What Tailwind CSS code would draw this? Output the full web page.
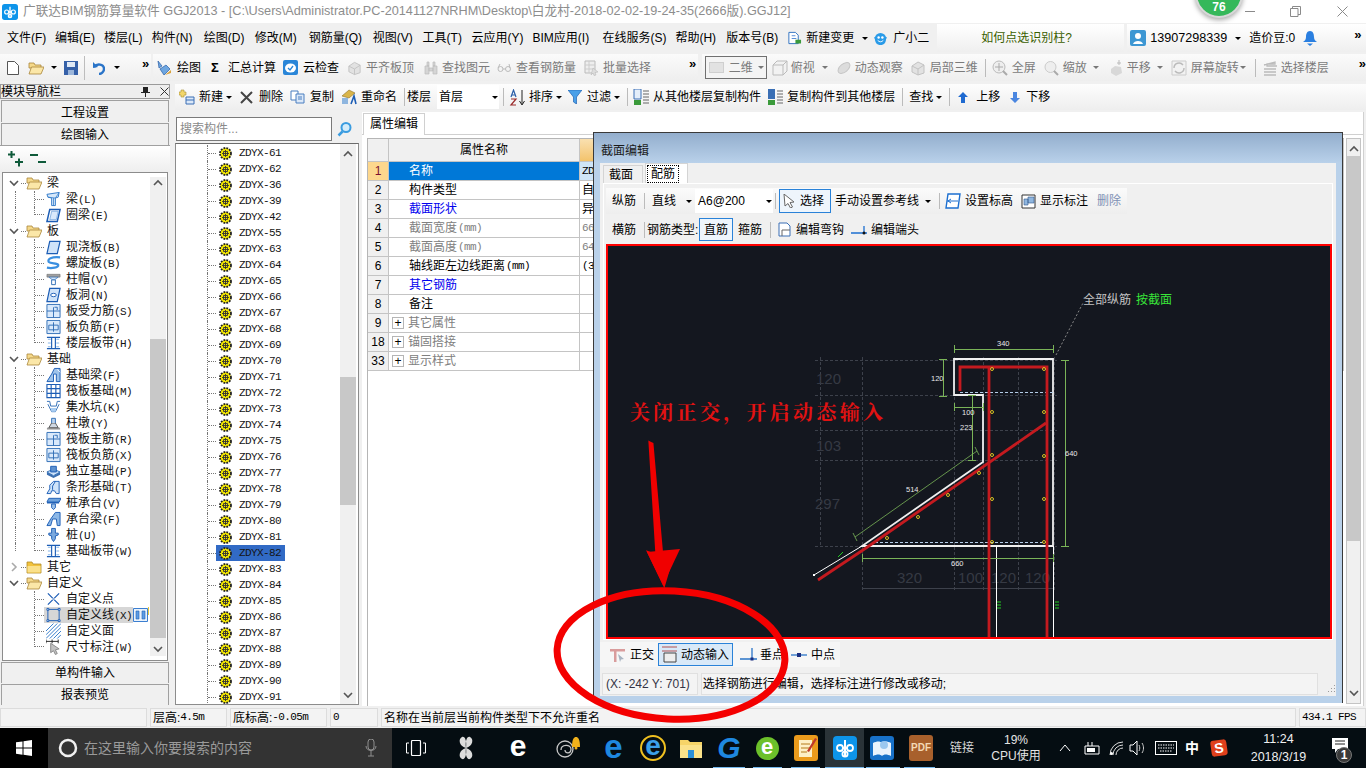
<!DOCTYPE html>
<html lang="zh-CN">
<head>
<meta charset="utf-8">
<title>GGJ2013</title>
<script src="https://cdn.jsdelivr.net/npm/@tailwindcss/browser@4"></script>
</head>
<body>
<svg class="hidden" width="0" height="0">
  <symbol id="gear" viewBox="0 0 13 13"><circle cx="6.500" cy="6.500" r="5.500" fill="#f4e800" stroke="#222" stroke-width="1.800" stroke-dasharray="1.800 1.100"/><circle cx="6.500" cy="6.500" r="4" fill="#f4e800"/><path d="M4.500 4.500h4v4h-4zM6.500 3v7M3 6.500h7" fill="none" stroke="#333" stroke-width=".9"/></symbol>
  <symbol id="fo" viewBox="0 0 16 14"><path d="M1 2h5l1 2h6v3H1z" fill="#f5d98a" stroke="#a9863a" stroke-width=".8"/><path d="M1 13l2.500-7H16l-3 7z" fill="#fbe7a8" stroke="#a9863a" stroke-width=".8"/></symbol>
  <symbol id="fc" viewBox="0 0 16 14"><path d="M1 2h5l1 2h8v9H1z" fill="#f2c23c" stroke="#b08a2a" stroke-width=".8"/><path d="M1.500 6h13v6.500h-13z" fill="#fae08a"/></symbol>
  <symbol id="down" viewBox="0 0 10 7"><path d="M1 1l4 4 4-4" fill="none" stroke="#555" stroke-width="1.600"/></symbol>
  <symbol id="up" viewBox="0 0 10 7"><path d="M1 6l4-4 4 4" fill="none" stroke="#555" stroke-width="1.600"/></symbol>
  <symbol id="beam" viewBox="0 0 16 16"><path d="M1 3l13-2-1 5-3 1v8H6V7L2 6z" fill="#d6e8fa" stroke="#2f79c9"/><path d="M8 7v8M2 6l8 1 4-6" fill="none" stroke="#2f79c9" stroke-width=".8"/></symbol>
  <symbol id="ring" viewBox="0 0 16 16"><path d="M4 2h11l-3 13H1z" fill="#fff" stroke="#1c5db5" stroke-width="1.600"/><path d="M6 4h7l-2 9H4z" fill="#d9e9fb" stroke="#5f97d8" stroke-width=".7"/></symbol>
  <symbol id="slab" viewBox="0 0 16 16"><path d="M4 2h11l-3 13H1z" fill="#cfe3f9" stroke="#1c5db5" stroke-width="1.300"/></symbol>
  <symbol id="spiral" viewBox="0 0 16 16"><path d="M15 2C6 1 1 4 3 7c2 2 9 1 10 3 1 3-7 4-12 3" fill="none" stroke="#3a8fe0" stroke-width="2.400"/></symbol>
  <symbol id="cap" viewBox="0 0 16 16"><path d="M1 3h14v3H1z" fill="#a0a0a0" stroke="#666" stroke-width=".6"/><path d="M3 6h10L9 9H7z" fill="#cfe3f9" stroke="#2f6db5" stroke-width=".7"/><path d="M6 9h4v5H6z" fill="#fff" stroke="#2f6db5"/></symbol>
  <symbol id="hole" viewBox="0 0 16 16"><path d="M4 1h11l-3 14H1z" fill="#cfe3f9" stroke="#1c5db5" stroke-width="1.300"/><ellipse cx="8" cy="8" rx="3" ry="1.800" fill="#fff" stroke="#1c5db5"/></symbol>
  <symbol id="rb1" viewBox="0 0 16 16"><path d="M1 1h14v14H1z" fill="#d9e9fb" stroke="#2f6db5"/><path d="M1 8h14M8 4v11" stroke="#2f6db5" fill="none"/><path d="M9 4h3v3" stroke="#2f6db5" fill="none"/></symbol>
  <symbol id="rb2" viewBox="0 0 16 16"><path d="M1 1h14v14H1z" fill="#d9e9fb" stroke="#2f6db5"/><path d="M3 6h10v5H3zM8 3v10" stroke="#2f6db5" fill="none"/></symbol>
  <symbol id="band" viewBox="0 0 16 16"><path d="M1 2h14M1 14h14M6 2v12M10 2v12" stroke="#1c5db5" fill="none" stroke-width="1.200"/><path d="M2 4h3M2 8h3M2 12h3M11 4h3M11 8h3M11 12h3" stroke="#7fb0e6"/></symbol>
  <symbol id="fb" viewBox="0 0 16 16"><path d="M1 15l5-8 3-6h6v14h-4V7H8v8z" fill="#9ec3ea" stroke="#1c5db5"/><path d="M12 2l3 3" stroke="#fff"/></symbol>
  <symbol id="raft" viewBox="0 0 16 16"><path d="M1 1h14v14H1zM1 5.500h14M1 10.500h14M5.500 1v14M10.500 1v14" fill="none" stroke="#1c5db5" stroke-width="1.200"/></symbol>
  <symbol id="pit" viewBox="0 0 16 16"><path d="M1 2h3l1 5h6l1-5h3M2 5l4 8h4l4-8" fill="none" stroke="#2f6db5"/><path d="M5 9h6l-1 4H6z" fill="#a8cdf2"/></symbol>
  <symbol id="pier" viewBox="0 0 16 16"><path d="M1 13h14v2H1z" fill="#999"/><path d="M3 13l3-5h4l3 5z" fill="#cfd8e3" stroke="#555"/><path d="M6 8V3h4v5" fill="#bcd4ee" stroke="#2f6db5"/></symbol>
  <symbol id="ftg" viewBox="0 0 16 16"><path d="M1 9l7 4 7-4v3l-7 3.500L1 12z" fill="#3c6fb0"/><path d="M1 9l7-3 7 3-7 4z" fill="#cfe3f9" stroke="#2f6db5"/><path d="M5 3h6v6H5z" fill="#5e92d0" stroke="#1c5db5"/></symbol>
  <symbol id="strip" viewBox="0 0 16 16"><path d="M1 15l3-5V6l4-4h6v13h-3l-2-3H6l-1 3z" fill="#cfe3f9" stroke="#1c5db5"/><path d="M10 2l-3 5v4" stroke="#1c5db5" fill="none"/></symbol>
  <symbol id="pcap" viewBox="0 0 16 16"><path d="M3 3h13l-2 4H1z" fill="#6fa3dc" stroke="#1c5db5"/><path d="M1 7h13v1.500H1z" fill="#1c5db5"/><path d="M6 9h4v4l-2 2-2-2z" fill="#9ec3ea" stroke="#1c5db5"/></symbol>
  <symbol id="cb" viewBox="0 0 16 16"><path d="M1 15l4-7 5-7h5v14h-3l-1-7H7l-2 7z" fill="#8db8e6" stroke="#1c5db5"/></symbol>
  <symbol id="pile" viewBox="0 0 16 16"><path d="M6 1h4v5h3v2l-3 1v3l-2 3-2-3V9L3 8V6h3z" fill="#7ba9de" stroke="#1c5db5"/></symbol>
  <symbol id="cpt" viewBox="0 0 16 16"><path d="M2 2l12 12M14 2L2 14" stroke="#1c5db5" stroke-width="1.300"/><path d="M6.500 8h3" stroke="#fff"/></symbol>
  <symbol id="cln" viewBox="0 0 16 16"><path d="M2 2h12v12H2z" fill="none" stroke="#1c5db5"/><path d="M1 1h2v2H1zM13 1h2v2h-2zM1 13h2v2H1zM13 13h2v2h-2z" fill="#fff" stroke="#1c5db5"/></symbol>
  <symbol id="cfa" viewBox="0 0 16 16"><path d="M0 8l8-8M0 12L12 0M0 16L16 0M4 16L16 4M8 16l8-8M12 16l4-4" stroke="#2f79c9"/></symbol>
  <symbol id="dim" viewBox="0 0 16 16"><path d="M0 2h13M0 0v4M6.500 0v4M13 0v4" stroke="#222" fill="none"/><path d="M5 4l9 6-4 1 2 4-2 1-2-4-3 2z" fill="#c2c2c2" stroke="#888"/></symbol>
  <symbol id="app" viewBox="0 0 24 24"><rect width="24" height="24" rx="4" fill="#0d94ea"/><path d="M12 4v16M9 12h6" stroke="#fff" stroke-width="2"/><circle cx="7" cy="12" r="3" fill="none" stroke="#fff" stroke-width="1.800"/><circle cx="17" cy="12" r="3" fill="none" stroke="#fff" stroke-width="1.800"/><circle cx="12" cy="18" r="2.600" fill="none" stroke="#fff" stroke-width="1.800"/></symbol>
  <symbol id="grey" viewBox="0 0 16 16"><path d="M2 6l6-4 6 3v8l-6 2-6-3z" fill="#e2e2e2" stroke="#c2c2c2"/><path d="M2 6l6 3 6-4M8 9v6" stroke="#c2c2c2" fill="none"/></symbol>
  <symbol id="file" viewBox="0 0 16 16"><path d="M2 2h7l3 3v9H2z" fill="#fff" stroke="#2c6fc0"/><path d="M5 5h4v1H5zM5 8h5v1H5z" fill="#5a90d8"/><path d="M9 10h6v4H9z" fill="#3c9a3c"/></symbol>
</svg>

<div class="relative w-[1366px] h-[768px] overflow-hidden flex flex-col bg-[#f0f0f0] text-[12px] leading-none text-black font-['Liberation_Sans','Noto_Sans_CJK_SC',sans-serif] [&_b]:font-['Liberation_Mono'] [&_b]:font-normal [&_b]:text-[11px] [&_b]:tracking-[-0.6px]">

  <!-- title bar -->
  <div class="h-[23px] shrink-0 bg-white flex items-center relative">
    <svg class="w-4 h-4 ml-[2px]"><use href="#app"/></svg>
    <span class="ml-[5px] text-[#8d8d8d] text-[12.700px] whitespace-nowrap">广联达BIM钢筋算量软件 GGJ2013 - [C:\Users\Administrator.PC-20141127NRHM\Desktop\白龙村-2018-02-02-19-24-35(2666版).GGJ12]</span>
    <svg class="w-[11px] h-[11px] ml-auto" viewBox="0 0 11 11"><path d="M0 5.500h10" stroke="#8a8a8a"/></svg>
    <svg class="w-[11px] h-[11px] ml-[34px]" viewBox="0 0 11 11"><path d="M.5 2.500h7.500v8H.5zM2.500 2.500v-2h8v8h-2.500" fill="none" stroke="#8a8a8a"/></svg>
    <svg class="w-[11px] h-[11px] ml-[36px] mr-[18px]" viewBox="0 0 11 11"><path d="M.5.500l10 10M10.500.500l-10 10" stroke="#8a8a8a"/></svg>
  </div>

  <!-- menu bar -->
  <div class="h-[30px] shrink-0 flex items-center pl-[7px] whitespace-nowrap">
    <span class="w-[48px]">文件(F)</span><span class="w-[49px]">编辑(E)</span><span class="w-[48px]">楼层(L)</span><span class="w-[52px]">构件(N)</span><span class="w-[51px]">绘图(D)</span><span class="w-[54px]">修改(M)</span><span class="w-[64px]">钢筋量(Q)</span><span class="w-[50px]">视图(V)</span><span class="w-[49px]">工具(T)</span><span class="w-[61px]">云应用(Y)</span><span class="w-[70px]">BIM应用(I)</span><span class="w-[73px]">在线服务(S)</span><span class="w-[51px]">帮助(H)</span><span class="w-[61px]">版本号(B)</span>
    <svg class="w-[15px] h-4" viewBox="0 0 16 16"><use href="#file"/></svg>
    <span class="ml-[4px]">新建变更</span>
    <i class="ml-[8px] w-0 h-0 border-x-[3px] border-x-transparent border-t-[3px] border-t-black"></i>
    <svg class="ml-[5px] w-[15px] h-[15px]" viewBox="0 0 16 16"><path d="M2 8a6 6 0 1 1 12 0c0 4-2 7-6 7s-6-3-6-7z" fill="#2a9be8"/><path d="M1 7l2-1v4zM15 7l-2-1v4z" fill="#2a9be8"/><circle cx="6" cy="7" r="1.300" fill="#fff"/><circle cx="10" cy="7" r="1.300" fill="#fff"/><path d="M5 10c2 2 4 2 6 0" stroke="#fff" fill="none"/></svg>
    <span class="ml-[5px]">广小二</span>
    <div class="ml-[8px] w-[187px] h-[28px] bg-linear-to-b from-white to-[#efefef] flex items-center pl-[44px] text-[#3b5f00]">如何点选识别柱?</div>
    <div class="ml-[3px] w-[239px] h-[28px] bg-linear-to-b from-white to-[#efefef] flex items-center pl-[3px]">
      <svg class="w-4 h-4" viewBox="0 0 16 16"><rect width="16" height="16" rx="2" fill="#3d97d3"/><circle cx="8" cy="6" r="3" fill="#fff"/><path d="M3 14c1-4 9-4 10 0z" fill="#fff"/></svg>
      <span class="ml-[4px] w-[77px] text-[12.600px]">13907298339</span>
      <i class="ml-[8px] w-0 h-0 border-x-[3px] border-x-transparent border-t-[3px] border-t-black"></i>
      <span class="ml-[8px] w-[46px]">造价豆:0</span>
      <svg class="ml-[8px] w-[14px] h-4" viewBox="0 0 14 16"><path d="M7 1c3 0 4 3 4 6 0 2 1 4 3 5H0c2-1 3-3 3-5 0-3 1-6 4-6z" fill="#2a7fe0"/><path d="M4 13.500h6L7 16z" fill="#2a7fe0"/></svg>
      <span class="ml-[37px] font-bold text-[13px] -mt-[8px]">»</span>
    </div>
  </div>

  <!-- toolbar 1 -->
  <div class="h-[29px] shrink-0 flex items-center whitespace-nowrap text-[#7b7b7b]">
    <div class="w-[151px] h-[27px] bg-linear-to-b from-[#fbfbfb] to-[#eeeeee] flex items-center text-black">
      <svg class="ml-[7px] w-[12px] h-[14px]" viewBox="0 0 12 14"><path d="M.5.500h7l4 4v9H.500z" fill="#fff" stroke="#555"/></svg>
      <svg class="ml-[9px] w-4 h-[14px]"><use href="#fo"/></svg>
      <i class="ml-[7px] w-0 h-0 border-x-[3px] border-x-transparent border-t-[3px] border-t-black"></i>
      <svg class="ml-[7px] w-[14px] h-[14px]" viewBox="0 0 14 14"><path d="M0 0h14v14H0z" fill="#3560a8"/><path d="M3 1h8v5H3z" fill="#dfe9f6"/><path d="M4 9h6v5H4z" fill="#9cb6da"/></svg>
      <i class="ml-[6px] w-px h-[24px] bg-[#bdbdbd]"></i>
      <svg class="ml-[8px] w-[12px] h-[14px]" viewBox="0 0 12 14"><path d="M1 6c3-4 10-3 10 2 0 3-3 5-5 5" fill="none" stroke="#2a74c8" stroke-width="2.400"/><path d="M0 1l5 5-5 1z" fill="#2a74c8"/></svg>
      <i class="ml-[9px] w-0 h-0 border-x-[3px] border-x-transparent border-t-[3px] border-t-black"></i>
      <span class="ml-[22px] -mt-[8px] font-bold text-[13px]">»</span>
    </div>
    <div class="ml-[2px] w-[545px] h-[27px] bg-linear-to-b from-[#fbfbfb] to-[#eeeeee] flex items-center">
      <svg class="ml-[3px] w-4 h-4" viewBox="0 0 16 16"><path d="M2 1l4 5-3 2zM4 9l6-4 4 4-6 6z" fill="#6ea6e0" stroke="#2a5ea8" stroke-width=".7"/><path d="M9 15l6-5v3z" fill="#d9a23c"/></svg>
      <span class="ml-[5px] text-black">绘图</span>
      <span class="ml-[10px] w-[9px] text-black font-bold text-[13px]">Σ</span>
      <span class="ml-[8px] text-black">汇总计算</span>
      <svg class="ml-[7px] w-[15px] h-[15px]" viewBox="0 0 15 15"><rect width="15" height="15" rx="2" fill="#2a86d8"/><ellipse cx="7.500" cy="8" rx="5.500" ry="4.500" fill="#fff"/><path d="M5 8l2 2 3-4" stroke="#2a86d8" fill="none" stroke-width="1.300"/></svg>
      <span class="ml-[5px] text-black">云检查</span>
      <svg class="ml-[8px] w-[15px] h-4"><use href="#grey"/></svg><span class="ml-[4px]">平齐板顶</span>
      <svg class="ml-[10px] w-[14px] h-[14px]" viewBox="0 0 14 14"><path d="M1 5h4v8H1zM9 5h4v8H9zM5 7h4v3H5zM3 1h2v4H3zM9 1h2v4H9z" fill="#d5d5d5" stroke="#bcbcbc" stroke-width=".7"/></svg><span class="ml-[4px]">查找图元</span>
      <svg class="ml-[7px] w-[15px] h-[14px]" viewBox="0 0 15 14"><circle cx="3.500" cy="8" r="2.500" fill="none" stroke="#bbb"/><circle cx="11" cy="8" r="2.500" fill="none" stroke="#bbb"/><path d="M6 8h2.500M1 7l2-4M13 7l-1-4" stroke="#bbb"/></svg><span class="ml-[4px]">查看钢筋量</span>
      <svg class="ml-[8px] w-[15px] h-4" viewBox="0 0 15 16"><path d="M1 1h10v12H1z" fill="#eee" stroke="#bbb"/><path d="M1 5h10M1 9h10M5 1v12" stroke="#ccc"/><path d="M9 8l5 4-3 .5L12 15l-2 .5-1-2.500-2 2z" fill="#ddd" stroke="#bbb" stroke-width=".6"/></svg><span class="ml-[4px]">批量选择</span>
      <span class="ml-[38px] -mt-[8px] font-bold text-[13px] text-black">»</span>
    </div>
    <div class="ml-[4px] flex-1 h-[27px] bg-linear-to-b from-[#fbfbfb] to-[#eeeeee] flex items-center">
      <div class="ml-[3px] w-[62px] h-[23px] border border-[#707070] bg-[#f4f4f4] flex items-center pl-[3px]"><i class="w-[15px] h-[11px] bg-[#e2e2e2] border border-[#cfcfcf]"></i><span class="ml-[5px]">二维</span><i class="ml-[5px] w-0 h-0 border-x-[3px] border-x-transparent border-t-[3px] border-t-[#777]"></i></div>
      <svg class="ml-[5px] w-4 h-4" viewBox="0 0 16 16"><path d="M1 5h10v10H1zM1 5l4-4h10v10l-4 4M11 5l4-4" fill="#f2f2f2" stroke="#bbb"/></svg><span class="ml-[3px]">俯视</span><i class="ml-[7px] w-0 h-0 border-x-[3px] border-x-transparent border-t-[3px] border-t-[#777]"></i>
      <svg class="ml-[8px] w-4 h-4" viewBox="0 0 16 16"><ellipse cx="8" cy="8" rx="7" ry="4" transform="rotate(-40 8 8)" fill="#dcdcdc" stroke="#c5c5c5"/></svg><span class="ml-[3px]">动态观察</span>
      <svg class="ml-[7px] w-4 h-4"><use href="#grey"/></svg><span class="ml-[4px]">局部三维</span>
      <i class="ml-[7px] w-px h-[18px] bg-[#bbb]"></i>
      <svg class="ml-[6px] w-4 h-4" viewBox="0 0 16 16"><circle cx="7" cy="7" r="6" fill="#eee" stroke="#bbb"/><path d="M7 3v8M3 7h8" stroke="#aaa"/><path d="M11 11l4 4" stroke="#aaa" stroke-width="2"/></svg><span class="ml-[4px]">全屏</span>
      <svg class="ml-[8px] w-[15px] h-4" viewBox="0 0 15 16"><circle cx="6.500" cy="7" r="5.500" fill="#eee" stroke="#ccc"/><path d="M10 11l4 4" stroke="#aaa" stroke-width="2"/></svg><span class="ml-[4px]">缩放</span><i class="ml-[6px] w-0 h-0 border-x-[3px] border-x-transparent border-t-[3px] border-t-[#777]"></i>
      <svg class="ml-[10px] w-[14px] h-4" viewBox="0 0 14 16"><path d="M2 9l4-3 6 1 1 6-6 3-5-3z" fill="#d8d8d8"/><path d="M10 0v5M8 3h4" stroke="#bbb"/></svg><span class="ml-[4px]">平移</span><i class="ml-[6px] w-0 h-0 border-x-[3px] border-x-transparent border-t-[3px] border-t-[#777]"></i>
      <svg class="ml-[8px] w-4 h-4" viewBox="0 0 16 16"><path d="M1 1h14v14H1z" fill="#f2f2f2" stroke="#ccc"/><path d="M3 8a5 5 0 0 1 9-3M13 8a5 5 0 0 1-9 3" fill="none" stroke="#bbb" stroke-width="1.400"/></svg><span class="ml-[4px]">屏幕旋转</span><i class="ml-[1px] w-0 h-0 border-x-[3px] border-x-transparent border-t-[3px] border-t-[#777]"></i>
      <i class="ml-[9px] w-px h-[18px] bg-[#bbb]"></i>
      <svg class="ml-[7px] w-[14px] h-4" viewBox="0 0 14 16"><path d="M1 5l11-3v2H4v2h10M1 9h12M1 12h12M1 15h12" fill="none" stroke="#bbb" stroke-width="1.300"/></svg><span class="ml-[4px]">选择楼层</span>
      <span class="ml-[30px] -mt-[8px] font-bold text-[13px] text-black">»</span>
    </div>
  </div>

  <!-- work area -->
  <div class="h-[622px] shrink-0 mt-[2px] flex">

    <!-- left navigation -->
    <div class="w-[170px] shrink-0 flex flex-col">
      <div class="h-[15px] border border-[#9a9a9a] bg-[#eeeeee] flex items-center"><span>模块导航栏</span><svg class="ml-[80px] w-[9px] h-[11px]" viewBox="0 0 9 11"><path d="M2 1h5v5h2v1H5v4H4V7H0V6h2z" fill="#222"/></svg><svg class="ml-[10px] w-[9px] h-[9px]" viewBox="0 0 9 9"><path d="M.5.500l8 8M8.500.500l-8 8" stroke="#333"/></svg></div>
      <div class="mt-[1px] h-[22px] pt-[2px] border-t border-x border-[#a0a0a0] bg-[#f0f0f0] mx-px flex items-center justify-center">工程设置</div>
      <div class="h-[22px] mt-px border-t border-x border-[#a0a0a0] bg-[#f0f0f0] mx-px flex items-center justify-center">绘图输入</div>
      <div class="h-[27px] border-t border-[#a0a0a0] bg-linear-to-b from-white to-[#eeeeee] flex items-center">
        <svg class="ml-[7px] w-4 h-4" viewBox="0 0 16 16"><path d="M1 3.500h7M4.500 0v7M8 11h8M12 7.500v8" stroke="#0f5a3a" stroke-width="2"/></svg>
        <svg class="ml-[7px] w-4 h-4" viewBox="0 0 16 16"><path d="M0 4h8M8 11h8" stroke="#0f5a3a" stroke-width="2"/></svg>
      </div>
      <!-- component tree -->
      <div class="mx-[2px] h-[489px] border border-[#8c8c8c] bg-white flex">
        <div class="w-[146px] pt-[2px] whitespace-nowrap overflow-hidden text-[#111] flex flex-col">
          <div class="h-4 flex items-center"><svg class="ml-[6px] w-[10px] h-[7px]"><use href="#down"/></svg><i class="w-[5px] ml-[2px] border-t border-dotted border-[#777]"></i><svg class="w-4 h-[14px]"><use href="#fo"/></svg><span class="ml-[5px]">梁</span></div>
          <div class="h-4 flex items-center"><i class="ml-[12px] w-[19px] h-full border-l border-dotted border-[#777]"></i><i class="w-[10px] h-full border-l border-dotted border-[#777] flex items-center"><i class="w-full border-t border-dotted border-[#777]"></i></i><svg class="ml-[2px] w-[15px] h-4"><use href="#beam"/></svg><span class="ml-[5px]">梁<b>(L)</b></span></div>
          <div class="h-4 flex items-center"><i class="ml-[12px] w-[19px] h-full border-l border-dotted border-[#777]"></i><i class="w-[10px] h-1/2 self-start border-l border-b border-dotted border-[#777]"></i><svg class="ml-[2px] w-[15px] h-4"><use href="#ring"/></svg><span class="ml-[5px]">圈梁<b>(E)</b></span></div>
          <div class="h-4 flex items-center"><svg class="ml-[6px] w-[10px] h-[7px]"><use href="#down"/></svg><i class="w-[5px] ml-[2px] border-t border-dotted border-[#777]"></i><svg class="w-4 h-[14px]"><use href="#fo"/></svg><span class="ml-[5px]">板</span></div>
          <div class="h-4 flex items-center"><i class="ml-[12px] w-[19px] h-full border-l border-dotted border-[#777]"></i><i class="w-[10px] h-full border-l border-dotted border-[#777] flex items-center"><i class="w-full border-t border-dotted border-[#777]"></i></i><svg class="ml-[2px] w-[15px] h-4"><use href="#slab"/></svg><span class="ml-[5px]">现浇板<b>(B)</b></span></div>
          <div class="h-4 flex items-center"><i class="ml-[12px] w-[19px] h-full border-l border-dotted border-[#777]"></i><i class="w-[10px] h-full border-l border-dotted border-[#777] flex items-center"><i class="w-full border-t border-dotted border-[#777]"></i></i><svg class="ml-[2px] w-[15px] h-4"><use href="#spiral"/></svg><span class="ml-[5px]">螺旋板<b>(B)</b></span></div>
          <div class="h-4 flex items-center"><i class="ml-[12px] w-[19px] h-full border-l border-dotted border-[#777]"></i><i class="w-[10px] h-full border-l border-dotted border-[#777] flex items-center"><i class="w-full border-t border-dotted border-[#777]"></i></i><svg class="ml-[2px] w-[15px] h-4"><use href="#cap"/></svg><span class="ml-[5px]">柱帽<b>(V)</b></span></div>
          <div class="h-4 flex items-center"><i class="ml-[12px] w-[19px] h-full border-l border-dotted border-[#777]"></i><i class="w-[10px] h-full border-l border-dotted border-[#777] flex items-center"><i class="w-full border-t border-dotted border-[#777]"></i></i><svg class="ml-[2px] w-[15px] h-4"><use href="#hole"/></svg><span class="ml-[5px]">板洞<b>(N)</b></span></div>
          <div class="h-4 flex items-center"><i class="ml-[12px] w-[19px] h-full border-l border-dotted border-[#777]"></i><i class="w-[10px] h-full border-l border-dotted border-[#777] flex items-center"><i class="w-full border-t border-dotted border-[#777]"></i></i><svg class="ml-[2px] w-[15px] h-4"><use href="#rb1"/></svg><span class="ml-[5px]">板受力筋<b>(S)</b></span></div>
          <div class="h-4 flex items-center"><i class="ml-[12px] w-[19px] h-full border-l border-dotted border-[#777]"></i><i class="w-[10px] h-full border-l border-dotted border-[#777] flex items-center"><i class="w-full border-t border-dotted border-[#777]"></i></i><svg class="ml-[2px] w-[15px] h-4"><use href="#rb2"/></svg><span class="ml-[5px]">板负筋<b>(F)</b></span></div>
          <div class="h-4 flex items-center"><i class="ml-[12px] w-[19px] h-full border-l border-dotted border-[#777]"></i><i class="w-[10px] h-1/2 self-start border-l border-b border-dotted border-[#777]"></i><svg class="ml-[2px] w-[15px] h-4"><use href="#band"/></svg><span class="ml-[5px]">楼层板带<b>(H)</b></span></div>
          <div class="h-4 flex items-center"><svg class="ml-[6px] w-[10px] h-[7px]"><use href="#down"/></svg><i class="w-[5px] ml-[2px] border-t border-dotted border-[#777]"></i><svg class="w-4 h-[14px]"><use href="#fo"/></svg><span class="ml-[5px]">基础</span></div>
          <div class="h-4 flex items-center"><i class="ml-[12px] w-[19px] h-full border-l border-dotted border-[#777]"></i><i class="w-[10px] h-full border-l border-dotted border-[#777] flex items-center"><i class="w-full border-t border-dotted border-[#777]"></i></i><svg class="ml-[2px] w-[15px] h-4"><use href="#fb"/></svg><span class="ml-[5px]">基础梁<b>(F)</b></span></div>
          <div class="h-4 flex items-center"><i class="ml-[12px] w-[19px] h-full border-l border-dotted border-[#777]"></i><i class="w-[10px] h-full border-l border-dotted border-[#777] flex items-center"><i class="w-full border-t border-dotted border-[#777]"></i></i><svg class="ml-[2px] w-[15px] h-4"><use href="#raft"/></svg><span class="ml-[5px]">筏板基础<b>(M)</b></span></div>
          <div class="h-4 flex items-center"><i class="ml-[12px] w-[19px] h-full border-l border-dotted border-[#777]"></i><i class="w-[10px] h-full border-l border-dotted border-[#777] flex items-center"><i class="w-full border-t border-dotted border-[#777]"></i></i><svg class="ml-[2px] w-[15px] h-4"><use href="#pit"/></svg><span class="ml-[5px]">集水坑<b>(K)</b></span></div>
          <div class="h-4 flex items-center"><i class="ml-[12px] w-[19px] h-full border-l border-dotted border-[#777]"></i><i class="w-[10px] h-full border-l border-dotted border-[#777] flex items-center"><i class="w-full border-t border-dotted border-[#777]"></i></i><svg class="ml-[2px] w-[15px] h-4"><use href="#pier"/></svg><span class="ml-[5px]">柱墩<b>(Y)</b></span></div>
          <div class="h-4 flex items-center"><i class="ml-[12px] w-[19px] h-full border-l border-dotted border-[#777]"></i><i class="w-[10px] h-full border-l border-dotted border-[#777] flex items-center"><i class="w-full border-t border-dotted border-[#777]"></i></i><svg class="ml-[2px] w-[15px] h-4"><use href="#rb1"/></svg><span class="ml-[5px]">筏板主筋<b>(R)</b></span></div>
          <div class="h-4 flex items-center"><i class="ml-[12px] w-[19px] h-full border-l border-dotted border-[#777]"></i><i class="w-[10px] h-full border-l border-dotted border-[#777] flex items-center"><i class="w-full border-t border-dotted border-[#777]"></i></i><svg class="ml-[2px] w-[15px] h-4"><use href="#rb2"/></svg><span class="ml-[5px]">筏板负筋<b>(X)</b></span></div>
          <div class="h-4 flex items-center"><i class="ml-[12px] w-[19px] h-full border-l border-dotted border-[#777]"></i><i class="w-[10px] h-full border-l border-dotted border-[#777] flex items-center"><i class="w-full border-t border-dotted border-[#777]"></i></i><svg class="ml-[2px] w-[15px] h-4"><use href="#ftg"/></svg><span class="ml-[5px]">独立基础<b>(P)</b></span></div>
          <div class="h-4 flex items-center"><i class="ml-[12px] w-[19px] h-full border-l border-dotted border-[#777]"></i><i class="w-[10px] h-full border-l border-dotted border-[#777] flex items-center"><i class="w-full border-t border-dotted border-[#777]"></i></i><svg class="ml-[2px] w-[15px] h-4"><use href="#strip"/></svg><span class="ml-[5px]">条形基础<b>(T)</b></span></div>
          <div class="h-4 flex items-center"><i class="ml-[12px] w-[19px] h-full border-l border-dotted border-[#777]"></i><i class="w-[10px] h-full border-l border-dotted border-[#777] flex items-center"><i class="w-full border-t border-dotted border-[#777]"></i></i><svg class="ml-[2px] w-[15px] h-4"><use href="#pcap"/></svg><span class="ml-[5px]">桩承台<b>(V)</b></span></div>
          <div class="h-4 flex items-center"><i class="ml-[12px] w-[19px] h-full border-l border-dotted border-[#777]"></i><i class="w-[10px] h-full border-l border-dotted border-[#777] flex items-center"><i class="w-full border-t border-dotted border-[#777]"></i></i><svg class="ml-[2px] w-[15px] h-4"><use href="#cb"/></svg><span class="ml-[5px]">承台梁<b>(F)</b></span></div>
          <div class="h-4 flex items-center"><i class="ml-[12px] w-[19px] h-full border-l border-dotted border-[#777]"></i><i class="w-[10px] h-full border-l border-dotted border-[#777] flex items-center"><i class="w-full border-t border-dotted border-[#777]"></i></i><svg class="ml-[2px] w-[15px] h-4"><use href="#pile"/></svg><span class="ml-[5px]">桩<b>(U)</b></span></div>
          <div class="h-4 flex items-center"><i class="ml-[12px] w-[19px] h-1/2 self-start border-l border-dotted border-[#777]"></i><i class="w-[10px] h-1/2 self-start border-l border-b border-dotted border-[#777]"></i><svg class="ml-[2px] w-[15px] h-4"><use href="#band"/></svg><span class="ml-[5px]">基础板带<b>(W)</b></span></div>
          <div class="h-4 flex items-center"><svg class="ml-[8px] w-[7px] h-[10px]" viewBox="0 0 7 10"><path d="M1 1l4 4-4 4" fill="none" stroke="#aaa" stroke-width="1.600"/></svg><i class="w-[5px] ml-[3px] border-t border-dotted border-[#777]"></i><svg class="w-4 h-[14px]"><use href="#fc"/></svg><span class="ml-[5px]">其它</span></div>
          <div class="h-4 flex items-center"><svg class="ml-[6px] w-[10px] h-[7px]"><use href="#down"/></svg><i class="w-[5px] ml-[2px] border-t border-dotted border-[#777]"></i><svg class="w-4 h-[14px]"><use href="#fo"/></svg><span class="ml-[5px]">自定义</span></div>
          <div class="h-4 flex items-center"><i class="ml-[31px] w-[10px] h-full border-l border-dotted border-[#777] flex items-center"><i class="w-full border-t border-dotted border-[#777]"></i></i><svg class="ml-[2px] w-[15px] h-4"><use href="#cpt"/></svg><span class="ml-[5px]">自定义点</span></div>
          <div class="h-4 flex items-center"><i class="ml-[31px] w-[10px] h-full border-l border-dotted border-[#777] flex items-center"><i class="w-full border-t border-dotted border-[#777]"></i></i><span class="flex items-center h-full w-[89px] bg-[#d6d6d6]"><svg class="ml-[2px] w-[15px] h-4"><use href="#cln"/></svg><span class="ml-[5px]">自定义线<b>(X)</b></span></span><svg class="w-[15px] h-[14px]" viewBox="0 0 15 14"><path d="M.5.500h14v13H.500z" fill="#eaf3fc" stroke="#3b7ed0"/><path d="M3 3h3v8H3zM9 3h3v8H9z" fill="#5d9ce4" stroke="#1f62b3" stroke-width=".6"/></svg><i class="w-px h-2 self-start bg-[#e5c83a]"></i></div>
          <div class="h-4 flex items-center"><i class="ml-[31px] w-[10px] h-full border-l border-dotted border-[#777] flex items-center"><i class="w-full border-t border-dotted border-[#777]"></i></i><svg class="ml-[2px] w-[15px] h-4"><use href="#cfa"/></svg><span class="ml-[5px]">自定义面</span></div>
          <div class="h-4 flex items-center"><i class="ml-[31px] w-[10px] h-1/2 self-start border-l border-b border-dotted border-[#777]"></i><svg class="ml-[2px] w-[15px] h-4"><use href="#dim"/></svg><span class="ml-[5px]">尺寸标注<b>(W)</b></span></div>
        </div>
        <div class="w-4 ml-px flex flex-col bg-[#f0f0f0] items-center my-[4px]">
          <svg class="mt-[2px] w-[10px] h-[7px] mb-[3px]"><use href="#up"/></svg>
          <div class="flex-1 w-full pt-[150px]"><div class="h-[299px] bg-[#c8c8c8]"></div></div>
          <svg class="w-[10px] h-[7px] mb-[3px]"><use href="#down"/></svg>
        </div>
      </div>
      <div class="mt-px h-[21px] border-t border-x border-[#a0a0a0] mx-px flex items-center justify-center">单构件输入</div>
      <div class="mt-px h-[21px] border-t border-x border-[#a0a0a0] mx-px flex items-center justify-center">报表预览</div>
    </div>

    <!-- right column -->
    <div class="flex-1 ml-[5px] min-w-0 flex flex-col">
      <div class="h-[26px] shrink-0 bg-linear-to-b from-[#fdfdfd] to-[#eeeeee] flex items-center whitespace-nowrap">
        <svg class="ml-[4px] w-4 h-4" viewBox="0 0 16 16"><path d="M2 1h3v2h2v3H5v2H2V6H0V3h2z" fill="#f2d66b" stroke="#a9913a" stroke-width=".6"/><path d="M7 8h8v7H7z" fill="#dbe8f8" stroke="#3a6fb5"/><path d="M7 11h8" stroke="#3a6fb5"/></svg><span class="ml-[4px]">新建</span><i class="ml-[3px] w-0 h-0 border-x-[3px] border-x-transparent border-t-[3px] border-t-black"></i>
        <svg class="ml-[8px] w-[13px] h-[13px]" viewBox="0 0 13 13"><path d="M1 1l11 11M12 1L1 12" stroke="#444" stroke-width="2"/></svg><span class="ml-[6px]">删除</span>
        <svg class="ml-[7px] w-[15px] h-[14px]" viewBox="0 0 15 14"><path d="M1 1h7v9H1z" fill="#fff" stroke="#4a7fc0"/><path d="M6 4h8v9H6z" fill="#dbe8f8" stroke="#4a7fc0"/><path d="M8 7h4M8 9h4" stroke="#4a7fc0"/></svg><span class="ml-[5px]">复制</span>
        <svg class="ml-[7px] w-4 h-4" viewBox="0 0 16 16"><path d="M1 7l7-6 6 3-6 5z" fill="#d9b54a" stroke="#8d7226" stroke-width=".6"/><path d="M1 9h6v6H1z" fill="#8fb6df"/><path d="M10 15l3-8 2 8" fill="none" stroke="#1c5db5" stroke-width="1.600"/></svg><span class="ml-[4px]">重命名</span>
        <i class="ml-[7px] w-px h-[18px] bg-[#bbb]"></i><span class="ml-[2px]">楼层</span>
        <div class="ml-[6px] w-[62px] h-[24px] bg-white flex items-center pl-[2px]"><span class="w-[53px]">首层</span><i class="w-0 h-0 border-x-[3px] border-x-transparent border-t-[3px] border-t-black"></i></div>
        <i class="ml-[4px] w-px h-[18px] bg-[#bbb]"></i>
        <svg class="ml-[5px] w-[17px] h-[17px]" viewBox="0 0 17 17"><path d="M2 8l2.500-7L7 8M3 6h3" fill="none" stroke="#2a5ea8" stroke-width="1.200"/><path d="M2 10h5l-5 6h5" fill="none" stroke="#9a2a2a" stroke-width="1.200"/><path d="M13 1v14M10.500 12l2.500 4 2.500-4" fill="none" stroke="#222"/></svg><span class="ml-[3px]">排序</span><i class="ml-[3px] w-0 h-0 border-x-[3px] border-x-transparent border-t-[3px] border-t-black"></i>
        <svg class="ml-[6px] w-[14px] h-[14px]" viewBox="0 0 14 14"><path d="M0 0h14L8.500 7v7l-3-2V7z" fill="#4aa0e8" stroke="#1f62b3" stroke-width=".7"/></svg><span class="ml-[5px]">过滤</span><i class="ml-[3px] w-0 h-0 border-x-[3px] border-x-transparent border-t-[3px] border-t-black"></i>
        <i class="ml-[7px] w-px h-[18px] bg-[#bbb]"></i>
        <svg class="ml-[5px] w-4 h-4" viewBox="0 0 16 16"><path d="M1 0h7v10H1z" fill="#e4eefa" stroke="#3a6fb5"/><path d="M1 11h7v5H1z" fill="#3a9a3a"/><path d="M10 2h6M10 5h6M10 8h6M10 11h6M10 14h6" stroke="#666"/></svg><span class="ml-[4px]">从其他楼层复制构件</span>
        <svg class="ml-[6px] w-4 h-4" viewBox="0 0 16 16"><path d="M1 0h7v10H1z" fill="#3a6fb5"/><path d="M1 11h7v5H1z" fill="#3a9a3a"/><path d="M10 2h6M10 5h6M10 8h6M10 11h6M10 14h6" stroke="#666"/></svg><span class="ml-[4px]">复制构件到其他楼层</span>
        <i class="ml-[7px] w-px h-[18px] bg-[#bbb]"></i><span class="ml-[6px]">查找</span><i class="ml-[3px] w-0 h-0 border-x-[3px] border-x-transparent border-t-[3px] border-t-black"></i>
        <i class="ml-[7px] w-px h-[18px] bg-[#bbb]"></i>
        <svg class="ml-[8px] w-[10px] h-[11px]" viewBox="0 0 10 11"><path d="M5 0l5 5H7v6H3V5H0z" fill="#1f6ad0"/></svg><span class="ml-[8px]">上移</span>
        <svg class="ml-[10px] w-[10px] h-[11px]" viewBox="0 0 10 11"><path d="M5 11L0 6h3V0h4v6h3z" fill="#4a86e0"/></svg><span class="ml-[6px]">下移</span>
      </div>
      <div class="flex-1 flex min-h-0 mt-[2px]">
        <!-- component list -->
        <div class="w-[184px] shrink-0 flex flex-col pt-[5px]">
          <div class="h-[24px] flex items-center shrink-0"><div class="ml-px w-[156px] h-[24px] border border-[#7a7a7a] bg-white flex items-center pl-[3px] text-[#8a8a8a]">搜索构件...</div><svg class="ml-[5px] w-4 h-4" viewBox="0 0 16 16"><circle cx="9" cy="6.500" r="4.500" fill="#d4ecfa" stroke="#3a9ce0" stroke-width="2"/><path d="M5.500 10.500L1.500 14.500" stroke="#3a9ce0" stroke-width="2.500"/></svg></div>
          <div class="mt-[2px] h-[562px] border border-[#8c8c8c] border-t-[#6c6c6c] bg-white flex overflow-hidden">
            <div class="w-[163px] whitespace-nowrap pt-[1px] [&_b]:text-[#151515]">
              <div class="h-4 flex items-center"><i class="ml-[31px] w-[9px] h-full border-l border-dotted border-[#777] flex items-center"><i class="w-full border-t border-dotted border-[#777]"></i></i><span class="flex items-center h-full w-[69px]"><svg class="ml-[3px] w-[13px] h-[13px]"><use href="#gear"/></svg><b class="ml-[7px]">ZDYX-61</b></span></div>
              <div class="h-4 flex items-center"><i class="ml-[31px] w-[9px] h-full border-l border-dotted border-[#777] flex items-center"><i class="w-full border-t border-dotted border-[#777]"></i></i><span class="flex items-center h-full w-[69px]"><svg class="ml-[3px] w-[13px] h-[13px]"><use href="#gear"/></svg><b class="ml-[7px]">ZDYX-62</b></span></div>
              <div class="h-4 flex items-center"><i class="ml-[31px] w-[9px] h-full border-l border-dotted border-[#777] flex items-center"><i class="w-full border-t border-dotted border-[#777]"></i></i><span class="flex items-center h-full w-[69px]"><svg class="ml-[3px] w-[13px] h-[13px]"><use href="#gear"/></svg><b class="ml-[7px]">ZDYX-36</b></span></div>
              <div class="h-4 flex items-center"><i class="ml-[31px] w-[9px] h-full border-l border-dotted border-[#777] flex items-center"><i class="w-full border-t border-dotted border-[#777]"></i></i><span class="flex items-center h-full w-[69px]"><svg class="ml-[3px] w-[13px] h-[13px]"><use href="#gear"/></svg><b class="ml-[7px]">ZDYX-39</b></span></div>
              <div class="h-4 flex items-center"><i class="ml-[31px] w-[9px] h-full border-l border-dotted border-[#777] flex items-center"><i class="w-full border-t border-dotted border-[#777]"></i></i><span class="flex items-center h-full w-[69px]"><svg class="ml-[3px] w-[13px] h-[13px]"><use href="#gear"/></svg><b class="ml-[7px]">ZDYX-42</b></span></div>
              <div class="h-4 flex items-center"><i class="ml-[31px] w-[9px] h-full border-l border-dotted border-[#777] flex items-center"><i class="w-full border-t border-dotted border-[#777]"></i></i><span class="flex items-center h-full w-[69px]"><svg class="ml-[3px] w-[13px] h-[13px]"><use href="#gear"/></svg><b class="ml-[7px]">ZDYX-55</b></span></div>
              <div class="h-4 flex items-center"><i class="ml-[31px] w-[9px] h-full border-l border-dotted border-[#777] flex items-center"><i class="w-full border-t border-dotted border-[#777]"></i></i><span class="flex items-center h-full w-[69px]"><svg class="ml-[3px] w-[13px] h-[13px]"><use href="#gear"/></svg><b class="ml-[7px]">ZDYX-63</b></span></div>
              <div class="h-4 flex items-center"><i class="ml-[31px] w-[9px] h-full border-l border-dotted border-[#777] flex items-center"><i class="w-full border-t border-dotted border-[#777]"></i></i><span class="flex items-center h-full w-[69px]"><svg class="ml-[3px] w-[13px] h-[13px]"><use href="#gear"/></svg><b class="ml-[7px]">ZDYX-64</b></span></div>
              <div class="h-4 flex items-center"><i class="ml-[31px] w-[9px] h-full border-l border-dotted border-[#777] flex items-center"><i class="w-full border-t border-dotted border-[#777]"></i></i><span class="flex items-center h-full w-[69px]"><svg class="ml-[3px] w-[13px] h-[13px]"><use href="#gear"/></svg><b class="ml-[7px]">ZDYX-65</b></span></div>
              <div class="h-4 flex items-center"><i class="ml-[31px] w-[9px] h-full border-l border-dotted border-[#777] flex items-center"><i class="w-full border-t border-dotted border-[#777]"></i></i><span class="flex items-center h-full w-[69px]"><svg class="ml-[3px] w-[13px] h-[13px]"><use href="#gear"/></svg><b class="ml-[7px]">ZDYX-66</b></span></div>
              <div class="h-4 flex items-center"><i class="ml-[31px] w-[9px] h-full border-l border-dotted border-[#777] flex items-center"><i class="w-full border-t border-dotted border-[#777]"></i></i><span class="flex items-center h-full w-[69px]"><svg class="ml-[3px] w-[13px] h-[13px]"><use href="#gear"/></svg><b class="ml-[7px]">ZDYX-67</b></span></div>
              <div class="h-4 flex items-center"><i class="ml-[31px] w-[9px] h-full border-l border-dotted border-[#777] flex items-center"><i class="w-full border-t border-dotted border-[#777]"></i></i><span class="flex items-center h-full w-[69px]"><svg class="ml-[3px] w-[13px] h-[13px]"><use href="#gear"/></svg><b class="ml-[7px]">ZDYX-68</b></span></div>
              <div class="h-4 flex items-center"><i class="ml-[31px] w-[9px] h-full border-l border-dotted border-[#777] flex items-center"><i class="w-full border-t border-dotted border-[#777]"></i></i><span class="flex items-center h-full w-[69px]"><svg class="ml-[3px] w-[13px] h-[13px]"><use href="#gear"/></svg><b class="ml-[7px]">ZDYX-69</b></span></div>
              <div class="h-4 flex items-center"><i class="ml-[31px] w-[9px] h-full border-l border-dotted border-[#777] flex items-center"><i class="w-full border-t border-dotted border-[#777]"></i></i><span class="flex items-center h-full w-[69px]"><svg class="ml-[3px] w-[13px] h-[13px]"><use href="#gear"/></svg><b class="ml-[7px]">ZDYX-70</b></span></div>
              <div class="h-4 flex items-center"><i class="ml-[31px] w-[9px] h-full border-l border-dotted border-[#777] flex items-center"><i class="w-full border-t border-dotted border-[#777]"></i></i><span class="flex items-center h-full w-[69px]"><svg class="ml-[3px] w-[13px] h-[13px]"><use href="#gear"/></svg><b class="ml-[7px]">ZDYX-71</b></span></div>
              <div class="h-4 flex items-center"><i class="ml-[31px] w-[9px] h-full border-l border-dotted border-[#777] flex items-center"><i class="w-full border-t border-dotted border-[#777]"></i></i><span class="flex items-center h-full w-[69px]"><svg class="ml-[3px] w-[13px] h-[13px]"><use href="#gear"/></svg><b class="ml-[7px]">ZDYX-72</b></span></div>
              <div class="h-4 flex items-center"><i class="ml-[31px] w-[9px] h-full border-l border-dotted border-[#777] flex items-center"><i class="w-full border-t border-dotted border-[#777]"></i></i><span class="flex items-center h-full w-[69px]"><svg class="ml-[3px] w-[13px] h-[13px]"><use href="#gear"/></svg><b class="ml-[7px]">ZDYX-73</b></span></div>
              <div class="h-4 flex items-center"><i class="ml-[31px] w-[9px] h-full border-l border-dotted border-[#777] flex items-center"><i class="w-full border-t border-dotted border-[#777]"></i></i><span class="flex items-center h-full w-[69px]"><svg class="ml-[3px] w-[13px] h-[13px]"><use href="#gear"/></svg><b class="ml-[7px]">ZDYX-74</b></span></div>
              <div class="h-4 flex items-center"><i class="ml-[31px] w-[9px] h-full border-l border-dotted border-[#777] flex items-center"><i class="w-full border-t border-dotted border-[#777]"></i></i><span class="flex items-center h-full w-[69px]"><svg class="ml-[3px] w-[13px] h-[13px]"><use href="#gear"/></svg><b class="ml-[7px]">ZDYX-75</b></span></div>
              <div class="h-4 flex items-center"><i class="ml-[31px] w-[9px] h-full border-l border-dotted border-[#777] flex items-center"><i class="w-full border-t border-dotted border-[#777]"></i></i><span class="flex items-center h-full w-[69px]"><svg class="ml-[3px] w-[13px] h-[13px]"><use href="#gear"/></svg><b class="ml-[7px]">ZDYX-76</b></span></div>
              <div class="h-4 flex items-center"><i class="ml-[31px] w-[9px] h-full border-l border-dotted border-[#777] flex items-center"><i class="w-full border-t border-dotted border-[#777]"></i></i><span class="flex items-center h-full w-[69px]"><svg class="ml-[3px] w-[13px] h-[13px]"><use href="#gear"/></svg><b class="ml-[7px]">ZDYX-77</b></span></div>
              <div class="h-4 flex items-center"><i class="ml-[31px] w-[9px] h-full border-l border-dotted border-[#777] flex items-center"><i class="w-full border-t border-dotted border-[#777]"></i></i><span class="flex items-center h-full w-[69px]"><svg class="ml-[3px] w-[13px] h-[13px]"><use href="#gear"/></svg><b class="ml-[7px]">ZDYX-78</b></span></div>
              <div class="h-4 flex items-center"><i class="ml-[31px] w-[9px] h-full border-l border-dotted border-[#777] flex items-center"><i class="w-full border-t border-dotted border-[#777]"></i></i><span class="flex items-center h-full w-[69px]"><svg class="ml-[3px] w-[13px] h-[13px]"><use href="#gear"/></svg><b class="ml-[7px]">ZDYX-79</b></span></div>
              <div class="h-4 flex items-center"><i class="ml-[31px] w-[9px] h-full border-l border-dotted border-[#777] flex items-center"><i class="w-full border-t border-dotted border-[#777]"></i></i><span class="flex items-center h-full w-[69px]"><svg class="ml-[3px] w-[13px] h-[13px]"><use href="#gear"/></svg><b class="ml-[7px]">ZDYX-80</b></span></div>
              <div class="h-4 flex items-center"><i class="ml-[31px] w-[9px] h-full border-l border-dotted border-[#777] flex items-center"><i class="w-full border-t border-dotted border-[#777]"></i></i><span class="flex items-center h-full w-[69px]"><svg class="ml-[3px] w-[13px] h-[13px]"><use href="#gear"/></svg><b class="ml-[7px]">ZDYX-81</b></span></div>
              <div class="h-4 flex items-center"><i class="ml-[31px] w-[9px] h-full border-l border-dotted border-[#777] flex items-center"><i class="w-full border-t border-dotted border-[#777]"></i></i><span class="flex items-center h-full w-[69px] bg-[#316ac5]"><svg class="ml-[3px] w-[13px] h-[13px]"><use href="#gear"/></svg><b class="ml-[7px]">ZDYX-82</b></span></div>
              <div class="h-4 flex items-center"><i class="ml-[31px] w-[9px] h-full border-l border-dotted border-[#777] flex items-center"><i class="w-full border-t border-dotted border-[#777]"></i></i><span class="flex items-center h-full w-[69px]"><svg class="ml-[3px] w-[13px] h-[13px]"><use href="#gear"/></svg><b class="ml-[7px]">ZDYX-83</b></span></div>
              <div class="h-4 flex items-center"><i class="ml-[31px] w-[9px] h-full border-l border-dotted border-[#777] flex items-center"><i class="w-full border-t border-dotted border-[#777]"></i></i><span class="flex items-center h-full w-[69px]"><svg class="ml-[3px] w-[13px] h-[13px]"><use href="#gear"/></svg><b class="ml-[7px]">ZDYX-84</b></span></div>
              <div class="h-4 flex items-center"><i class="ml-[31px] w-[9px] h-full border-l border-dotted border-[#777] flex items-center"><i class="w-full border-t border-dotted border-[#777]"></i></i><span class="flex items-center h-full w-[69px]"><svg class="ml-[3px] w-[13px] h-[13px]"><use href="#gear"/></svg><b class="ml-[7px]">ZDYX-85</b></span></div>
              <div class="h-4 flex items-center"><i class="ml-[31px] w-[9px] h-full border-l border-dotted border-[#777] flex items-center"><i class="w-full border-t border-dotted border-[#777]"></i></i><span class="flex items-center h-full w-[69px]"><svg class="ml-[3px] w-[13px] h-[13px]"><use href="#gear"/></svg><b class="ml-[7px]">ZDYX-86</b></span></div>
              <div class="h-4 flex items-center"><i class="ml-[31px] w-[9px] h-full border-l border-dotted border-[#777] flex items-center"><i class="w-full border-t border-dotted border-[#777]"></i></i><span class="flex items-center h-full w-[69px]"><svg class="ml-[3px] w-[13px] h-[13px]"><use href="#gear"/></svg><b class="ml-[7px]">ZDYX-87</b></span></div>
              <div class="h-4 flex items-center"><i class="ml-[31px] w-[9px] h-full border-l border-dotted border-[#777] flex items-center"><i class="w-full border-t border-dotted border-[#777]"></i></i><span class="flex items-center h-full w-[69px]"><svg class="ml-[3px] w-[13px] h-[13px]"><use href="#gear"/></svg><b class="ml-[7px]">ZDYX-88</b></span></div>
              <div class="h-4 flex items-center"><i class="ml-[31px] w-[9px] h-full border-l border-dotted border-[#777] flex items-center"><i class="w-full border-t border-dotted border-[#777]"></i></i><span class="flex items-center h-full w-[69px]"><svg class="ml-[3px] w-[13px] h-[13px]"><use href="#gear"/></svg><b class="ml-[7px]">ZDYX-89</b></span></div>
              <div class="h-4 flex items-center"><i class="ml-[31px] w-[9px] h-full border-l border-dotted border-[#777] flex items-center"><i class="w-full border-t border-dotted border-[#777]"></i></i><span class="flex items-center h-full w-[69px]"><svg class="ml-[3px] w-[13px] h-[13px]"><use href="#gear"/></svg><b class="ml-[7px]">ZDYX-90</b></span></div>
              <div class="h-4 flex items-center"><i class="ml-[31px] w-[9px] h-full border-l border-dotted border-[#777] flex items-center"><i class="w-full border-t border-dotted border-[#777]"></i></i><span class="flex items-center h-full w-[69px]"><svg class="ml-[3px] w-[13px] h-[13px]"><use href="#gear"/></svg><b class="ml-[7px]">ZDYX-91</b></span></div>
            </div>
            <div class="w-4 ml-px bg-[#f0f0f0] flex flex-col items-center">
              <svg class="mt-[6px] w-[10px] h-[7px] mb-[3px]"><use href="#up"/></svg>
              <div class="flex-1 w-full pt-[217px]"><div class="h-[128px] bg-[#c8c8c8]"></div></div>
              <svg class="w-[10px] h-[7px] mb-[5px]"><use href="#down"/></svg>
            </div>
          </div>
        </div>

        <!-- property pane -->
        <div class="ml-[3px] w-[1002px] h-[594px] bg-white flex flex-col border-r border-[#d0d0d0]">
          <div class="h-[23px] shrink-0 flex items-end border-b border-[#d0d0d0]"><div class="ml-px w-[62px] h-[22px] pb-[2px] border border-b-0 border-[#d0d0d0] bg-white flex items-center justify-center -mb-px">属性编辑</div></div>
          <div class="ml-[5px] mt-[3px] flex flex-1 min-h-0">
            <div class="flex-1 border-t border-l border-[#b5b5b5]">
              <div class="grid grid-cols-[21px_191px_1fr] [&>div]:border-b [&>div]:border-r [&>div]:border-[#c4c4c4] [&>div]:flex [&>div]:items-center">
                <div class="h-[23px] bg-[#f0f0f0]"></div><div class="h-[23px] bg-[#f0f0f0] justify-center">属性名称</div><div class="h-[23px] bg-linear-to-b from-[#f9e0b0] to-[#f3c36b]"></div>
                <div class="h-[19px] bg-[#fdd78d] justify-center text-[#7a1030]">1</div><div class="h-[19px] bg-[#0078d7] text-white pl-[20px]">名称</div><div class="h-[19px] bg-[#cfe5f8]"><b class="ml-[2px]">ZD</b></div>
                <div class="h-[19px] bg-[#f0f0f0] justify-center">2</div><div class="h-[19px] pl-[20px]">构件类型</div><div class="h-[19px] pl-[2px]">自</div>
                <div class="h-[19px] bg-[#f0f0f0] justify-center">3</div><div class="h-[19px] pl-[20px] text-[#0000ee]">截面形状</div><div class="h-[19px] pl-[2px]">异</div>
                <div class="h-[19px] bg-[#f0f0f0] justify-center">4</div><div class="h-[19px] pl-[20px] text-[#808080]">截面宽度<b class="ml-[1px]">(mm)</b></div><div class="h-[19px] pl-[2px] text-[#808080]"><b>66</b></div>
                <div class="h-[19px] bg-[#f0f0f0] justify-center">5</div><div class="h-[19px] pl-[20px] text-[#808080]">截面高度<b class="ml-[1px]">(mm)</b></div><div class="h-[19px] pl-[2px] text-[#808080]"><b>64</b></div>
                <div class="h-[19px] bg-[#f0f0f0] justify-center">6</div><div class="h-[19px] pl-[20px]">轴线距左边线距离<b class="ml-[1px]">(mm)</b></div><div class="h-[19px] pl-[2px]"><b>(3</b></div>
                <div class="h-[19px] bg-[#f0f0f0] justify-center">7</div><div class="h-[19px] pl-[20px] text-[#0000ee]">其它钢筋</div><div class="h-[19px]"></div>
                <div class="h-[19px] bg-[#f0f0f0] justify-center">8</div><div class="h-[19px] pl-[20px]">备注</div><div class="h-[19px]"></div>
                <div class="h-[19px] bg-[#f0f0f0] justify-center">9</div><div class="h-[19px] pl-[3px] text-[#808080]"><i class="w-[12px] h-[12px] border border-[#b5b5b5] text-black not-italic flex items-center justify-center text-[12px]">+</i><span class="ml-[4px]">其它属性</span></div><div class="h-[19px]"></div>
                <div class="h-[19px] bg-[#f0f0f0] justify-center">18</div><div class="h-[19px] pl-[3px] text-[#808080]"><i class="w-[12px] h-[12px] border border-[#b5b5b5] text-black not-italic flex items-center justify-center text-[12px]">+</i><span class="ml-[4px]">锚固搭接</span></div><div class="h-[19px]"></div>
                <div class="h-[19px] bg-[#f0f0f0] justify-center">33</div><div class="h-[19px] pl-[3px] text-[#808080]"><i class="w-[12px] h-[12px] border border-[#b5b5b5] text-black not-italic flex items-center justify-center text-[12px]">+</i><span class="ml-[4px]">显示样式</span></div><div class="h-[19px]"></div>
              </div>
            </div>
            <div class="ml-[2px] w-[15px] border border-[#c4c4c4] flex flex-col items-center bg-[#f0f0f0] mr-[2px] mb-[2px]">
              <svg class="mt-[6px] w-[10px] h-[7px] mb-[4px]"><use href="#up"/></svg>
              <div class="flex-1 w-full"><div class="h-[385px] bg-[#c8c8c8]"></div></div>
              <svg class="w-[10px] h-[7px] mb-[6px]"><use href="#down"/></svg>
            </div>
          </div>
        </div>
      </div>
    </div>
  </div>

  <!-- status bar -->
  <div class="mt-[2px] h-[19px] shrink-0 flex gap-[3px] whitespace-nowrap [&>div]:border [&>div]:border-[#dcdcdc] [&>div]:bg-[#f3f3f3] [&>div]:flex [&>div]:items-center [&>div]:pl-[2px]">
    <div class="w-[147px]"></div>
    <div class="w-[77px]">层高:<b>4.5m</b></div>
    <div class="w-[97px]">底标高:<b>-0.05m</b></div>
    <div class="w-[48px]"><b>0</b></div>
    <div class="w-[915px]">名称在当前层当前构件类型下不允许重名</div>
    <div class="flex-1"><b>434.1 FPS</b></div>
  </div>

  <!-- taskbar -->
  <div class="mt-px h-10 shrink-0 bg-[#050d12] flex items-center text-white whitespace-nowrap">
    <div class="w-[48px] h-full bg-black flex items-center justify-center"><svg class="w-4 h-4" viewBox="0 0 16 16"><path d="M0 2.300l6.500-.9v6.200H0zM7.500 1.300L16 0v7.600H7.500zM0 8.500h6.500v6.200L0 13.800zM7.500 8.500H16V16l-8.500-1.200z" fill="#fff"/></svg></div>
    <div class="w-[344px] h-full bg-[#333333] flex items-center">
      <svg class="ml-[10px] w-5 h-5" viewBox="0 0 20 20"><circle cx="10" cy="10" r="8" fill="none" stroke="#f0f0f0" stroke-width="2.500"/></svg>
      <span class="ml-[6px] text-[#9a9a9a] text-[14px] w-[281px]">在这里输入你要搜索的内容</span>
      <svg class="w-3 h-[18px]" viewBox="0 0 12 18"><rect x="3" y="0" width="6" height="11" rx="3" fill="none" stroke="#8f8f8f"/><path d="M1 7c0 6 10 6 10 0M6 12v5M3 17h6" fill="none" stroke="#8f8f8f"/></svg>
    </div>
    <div class="w-[48px] h-full flex items-center justify-center"><svg class="w-5 h-4" viewBox="0 0 20 16"><rect x="5.500" y=".5" width="9" height="15" rx="1" fill="none" stroke="#fff" stroke-width="1.200"/><path d="M3 3H.5v10H3M17 3h2.500v10H17" fill="none" stroke="#fff"/></svg></div>
    <div class="w-[52px] h-full flex items-center justify-center"><svg class="w-[22px] h-[24px]" viewBox="0 0 22 24"><path d="M11 12C4 10 3 3 7 1c3-1 5 4 4 11zM11 12c7-2 8-9 4-11-3-1-5 4-4 11zM11 12c-7 2-8 9-4 11 3 1 5-4 4-11zM11 12c7 2 8 9 4 11-3 1-5-4-4-11z" fill="#dcdcdc"/></svg></div>
    <div class="w-[52px] h-full flex items-center justify-center text-white font-bold text-[30px] pb-[4px]">e</div>
    <div class="w-[49px] h-full flex items-center justify-center"><svg class="w-[28px] h-[26px]" viewBox="0 0 28 26"><circle cx="10" cy="14" r="8" fill="none" stroke="#c8c8c8" stroke-width="1.300"/><path d="M6 15c0-6 10-6 10-1s-6 5-6 1" fill="none" stroke="#c8c8c8" stroke-width="1.300"/><path d="M17 12c0-8 2-10 4-10s4 2 4 10z" fill="#f2b21b"/><circle cx="21" cy="13" r="1.500" fill="#f2b21b"/></svg></div>
    <div class="w-[41px] h-full flex items-center justify-center text-[#1e88e0] font-bold text-[33px] pb-[4px]">e</div>
    <div class="w-[38px] h-full flex items-center justify-center"><span class="w-[26px] h-[26px] rounded-full border-2 border-[#f0c020] flex items-center justify-center text-[#3ba0e8] font-bold text-[28px] pb-[5px]">e</span></div>
    <div class="w-[38px] h-full flex items-center justify-center"><svg class="w-[24px] h-[22px]" viewBox="0 0 24 22"><path d="M1 3h8l2 2h12v16H1z" fill="#f6d468"/><path d="M1 8h22v13H1z" fill="#fbe28a"/><path d="M9 13h6v8H9z" fill="#2b8fd8"/></svg></div>
    <div class="w-[38px] h-full flex items-center justify-center text-[#1e88e0] font-bold italic text-[30px]">G</div>
    <div class="w-[38px] h-full flex items-center justify-center"><span class="w-[23px] h-[23px] rounded-full bg-[#6cc02a] flex items-center justify-center text-white font-bold text-[22px] pb-[3px]">e</span></div>
    <div class="w-[39px] h-full flex items-center justify-center"><svg class="w-[24px] h-[26px]" viewBox="0 0 24 26"><rect width="24" height="26" rx="3" fill="#eb9b1c"/><path d="M5 5h13v17H5z" fill="#fdf0c8"/><path d="M7 9h9M7 13h9M7 17h6" stroke="#b57a1a"/><path d="M13 16L21 3l2 1-8 13z" fill="#c0392b"/></svg></div>
    <div class="w-[39px] h-full flex items-center justify-center bg-[#2a3338]"><svg class="w-[24px] h-[24px]"><use href="#app"/></svg></div>
    <div class="w-[36px] h-full flex items-center justify-center"><svg class="w-[24px] h-[24px]" viewBox="0 0 24 24"><rect width="24" height="24" rx="3" fill="#1871c8"/><path d="M3 7c4-2 7-2 9 0 2-2 5-2 9 0v13c-4-2-7-2-9 0-2-2-5-2-9 0z" fill="#eaf3fc"/><circle cx="14" cy="9" r="4" fill="#9cc8ef"/></svg></div>
    <div class="w-[42px] h-full flex items-center justify-center"><span class="w-[24px] h-[26px] rounded-[3px] bg-[#a8602c] flex items-center justify-center text-[#f3d9b5] text-[10px] font-bold">PDF</span></div>
    <span class="ml-[8px] w-[24px] text-[#d8d8d8]">链接</span>
    <div class="ml-[11px] w-[62px] flex flex-col items-center gap-[4px] text-[#e4e4e4]"><span>19%</span><span class="text-[12px]">CPU使用</span></div>
    <svg class="ml-[12px] w-[12px] h-[8px]" viewBox="0 0 12 8"><path d="M1 7l5-6 5 6" fill="none" stroke="#fff"/></svg>
    <svg class="ml-[13px] w-[16px] h-[14px]" viewBox="0 0 16 14"><path d="M1 5h14v8H1z" fill="none" stroke="#fff"/><path d="M3 7h8v4H3z" fill="#fff"/><path d="M4 1v4M8 1v4" stroke="#fff"/></svg>
    <svg class="ml-[9px] w-[15px] h-[15px]" viewBox="0 0 15 15"><path d="M1 14a13 13 0 0 1 13-13M4 14a10 10 0 0 1 10-10M7 14a7 7 0 0 1 7-7" fill="none" stroke="#ddd"/><circle cx="2.500" cy="12.500" r="1.500" fill="#fff"/></svg>
    <svg class="ml-[5px] w-[16px] h-[16px]" viewBox="0 0 16 16"><path d="M1 5h3l4-4v14l-4-4H1z" fill="none" stroke="#fff"/><path d="M10 5c1 2 1 4 0 6M13 3c2 3 2 7 0 10" fill="none" stroke="#ccc"/></svg>
    <svg class="ml-[10px] w-[22px] h-[14px]" viewBox="0 0 22 14"><rect x=".5" y=".5" width="21" height="13" fill="none" stroke="#fff"/><path d="M3 4h16M3 7h16M5 10h12" stroke="#fff" stroke-dasharray="1.500 1"/></svg>
    <span class="ml-[8px] text-[14px] font-bold">中</span>
    <span class="ml-[12px] w-[16px] h-[16px] rounded-[3px] bg-[#e0401c] flex items-center justify-center text-white text-[14px] font-bold rotate-[-8deg]">S</span>
    <div class="ml-[15px] w-[73px] flex flex-col items-center gap-[5px] text-[#f0f0f0] text-[12.500px]"><span>11:24</span><span>2018/3/19</span></div>
    <div class="ml-[9px] relative w-[40px] h-full flex items-center justify-center">
      <svg class="w-[16px] h-[15px] -mt-[6px] -ml-[8px]" viewBox="0 0 16 15"><path d="M0 0h16v11H6l-3 4v-4H0z" fill="#fff"/><path d="M3 3h10M3 6h10" stroke="#222"/></svg>
      <span class="absolute left-[12px] top-[19px] w-[16px] h-[16px] rounded-full bg-[#3a3a3a] border border-[#777] flex items-center justify-center text-[12px] font-bold">1</span>
    </div>
  </div>

  <!-- taskbar running-app underlines -->
  <div class="absolute left-[713px] top-[767px] w-[32px] h-px bg-[#76b9ed]"></div>
  <div class="absolute left-[753px] top-[767px] w-[29px] h-px bg-[#76b9ed]"></div>
  <div class="absolute left-[791px] top-[767px] w-[29px] h-px bg-[#76b9ed]"></div>
  <div class="absolute left-[825px] top-[767px] w-[39px] h-px bg-[#76b9ed]"></div>
  <div class="absolute left-[866px] top-[767px] w-[34px] h-px bg-[#76b9ed]"></div>
  <div class="absolute left-[904px] top-[767px] w-[31px] h-px bg-[#76b9ed]"></div>

  <!-- floating score badge -->
  <div class="absolute left-[1195px] top-[-30px] w-[48px] h-[48px] rounded-full bg-[#35b85a] border-2 border-[#d8d8d8] shadow-[0_2px_5px_rgba(0,0,0,.35)]"></div>
  <div class="absolute left-[1195px] top-[1px] w-[48px] h-[12px] flex items-center justify-center text-white font-bold text-[12px]">76</div>

  <!-- section editor dialog -->
  <div class="absolute left-[593px] top-[132px] w-[750px] h-[571px] border border-[#3a3a3a] border-b-0 bg-[#b9d1ea] flex flex-col">
    <div class="h-[30px] shrink-0 bg-linear-to-b from-[#93aecd] to-[#b9d1ea] flex items-center pl-[7px] pt-[6px] text-[#1a1a1a]">截面编辑</div>
    <div class="mx-[6px] h-[533px] bg-[#f0f0f0] flex flex-col">
      <div class="h-[20px] shrink-0 flex items-end pl-[3px]">
        <div class="w-[40px] h-[18px] border border-b-0 border-[#d4d4d4] flex items-center pl-[5px]">截面</div>
        <div class="ml-[2px] w-[43px] h-[20px] bg-white flex items-center pl-px border border-b-0 border-[#d4d4d4]"><span class="border border-dotted border-black px-[3px] py-[2px]">配筋</span></div>
      </div>
      <div class="mx-[3px] w-[730px] h-[457px] shrink-0 border border-white p-[2px] pt-[4px] flex flex-col">
        <div class="h-[26px] shrink-0 flex items-center whitespace-nowrap">
          <div class="w-[521px] h-full bg-linear-to-b from-[#fbfbfb] to-[#eeeeee] flex items-center">
            <span class="ml-[6px]">纵筋</span><i class="ml-[8px] w-px h-[16px] bg-[#bbb]"></i><span class="ml-[7px]">直线</span><i class="ml-[10px] w-0 h-0 border-x-[3px] border-x-transparent border-t-[3px] border-t-black"></i>
            <div class="ml-[3px] w-[78px] h-[24px] bg-white flex items-center pl-[3px]"><span class="w-[68px]">A6@200</span><i class="w-0 h-0 border-x-[3px] border-x-transparent border-t-[3px] border-t-black"></i></div>
            <i class="ml-[2px] w-px h-[16px] bg-[#bbb]"></i>
            <div class="ml-[3px] w-[52px] h-[24px] border border-[#2a82d8] bg-[#eef5fc] flex items-center pl-[3px]"><svg class="w-[13px] h-[14px]" viewBox="0 0 13 14"><path d="M1 0l10 8-4 .5 2.500 4.500-2 1L5 9.500 2 12z" fill="#fff" stroke="#666"/></svg><span class="ml-[4px]">选择</span></div>
            <span class="ml-[4px]">手动设置参考线</span><i class="ml-[6px] w-0 h-0 border-x-[3px] border-x-transparent border-t-[3px] border-t-black"></i>
            <i class="ml-[8px] w-px h-[16px] bg-[#bbb]"></i>
            <svg class="ml-[5px] w-4 h-4" viewBox="0 0 16 16"><path d="M3 1h12l-2 14H1z" fill="#fff" stroke="#1c6fd0" stroke-width="1.400"/><path d="M2 8h11M6 6l-3 2 3 2" fill="none" stroke="#1c6fd0"/></svg><span class="ml-[4px]">设置标高</span>
            <svg class="ml-[8px] w-[15px] h-4" viewBox="0 0 15 16"><path d="M1 2h13v13H1z" fill="#fff" stroke="#333"/><path d="M3 12h4V6H3zM7 4h6v6H7z" fill="#8fb6df" stroke="#33598c" stroke-width=".6"/></svg><span class="ml-[4px]">显示标注</span>
            <span class="ml-[9px] text-[#7f91b5]">删除</span>
          </div>
        </div>
        <div class="h-[29px] pt-[2px] shrink-0 flex items-center whitespace-nowrap">
          <span class="ml-[6px]">横筋</span><i class="ml-[8px] w-px h-[16px] bg-[#bbb]"></i><span class="ml-[2px] w-[52px]">钢筋类型:</span>
          <div class="w-[34px] h-[23px] border border-[#2a82d8] bg-[#eef5fc] flex items-center justify-center">直筋</div>
          <span class="ml-[5px]">箍筋</span><i class="ml-[8px] w-px h-[16px] bg-[#bbb]"></i>
          <svg class="ml-[6px] w-[15px] h-4" viewBox="0 0 15 16"><path d="M2 1h8l3 3v10H2z" fill="#fff" stroke="#3a6fb5"/><path d="M5 14V8h8" fill="none" stroke="#666"/></svg><span class="ml-[4px]">编辑弯钩</span>
          <svg class="ml-[7px] w-4 h-4" viewBox="0 0 16 16"><path d="M0 11h16M13 4v7" stroke="#1c6fd0" stroke-width="1.300"/><circle cx="13" cy="11" r="1.500" fill="#111"/></svg><span class="ml-[4px]">编辑端头</span>
        </div>
        <!-- drawing canvas -->
        <div class="mt-px w-[726px] h-[395px] shrink-0 border-2 border-[#ff0000] bg-[#14171f]">
          <svg class="block w-full h-full" viewBox="608 246 722 391">
            <g stroke="#3d414b" fill="none" stroke-dasharray="3 2" shape-rendering="crispEdges">
              <path d="M815 360H1057M815 395H1057M815 430H1057M815 460H1057M815 546H1057M820 357V546M862 357V592M954 357V592M983 357V592M1018 357V592M1054 357V592"/>
            </g>
            <path d="M862 588H1054" stroke="#3d414b" shape-rendering="crispEdges"/>
            <g fill="#363a44" font-size="15"><text x="816" y="384">120</text><text x="816" y="451">103</text><text x="815" y="509">297</text><text x="897" y="583">320</text><text x="958" y="583">100</text><text x="991" y="583">120</text><text x="1025" y="583">120</text></g>
            <path d="M954 359H1053V546H862L983 462V395H954z" fill="none" stroke="#f0f0f0" stroke-width="1.800"/>
            <path d="M862 546L814 575" stroke="#fff"/>
            <rect x="813" y="574" width="2" height="2" fill="#fff"/>
            <path d="M996 546V637M1053 546V637" stroke="#fff" shape-rendering="crispEdges"/>
            <path d="M960 392H1053M875 542H1050" stroke="#b4cce8" stroke-dasharray="3 2" shape-rendering="crispEdges"/>
            <g stroke="#7ab458" fill="none">
              <path shape-rendering="crispEdges" d="M954 349H1053M954 345V353M1053 345V353M943 359V396M939 359H947M939 396H947M1065 360V546M1061 360H1069M1061 546H1069M954 407H983M954 403V411M983 403V411M972 395V460M968 395H976M968 460H976M862 558H1053M862 554V562M1053 554V562"/>
              <path d="M855 537L977 451M853 533L857 541M975 447L979 455" stroke-width=".8"/>
            </g>
            <path d="M1056 355L1083 303" stroke="#888" stroke-dasharray="2 2"/>
            <g stroke="#c41a1f" fill="none" stroke-width="2.800">
              <path d="M960 391V367H1047V637M989 367V637"/>
              <path d="M818 580L866 548L1046 423"/>
            </g>
            <g fill="none" stroke="#d8c324" stroke-width="1"><circle cx="992" cy="369" r="1.500"/><circle cx="1044" cy="369" r="1.500"/><circle cx="992" cy="412" r="1.500"/><circle cx="1044" cy="412" r="1.500"/><circle cx="992" cy="455" r="1.500"/><circle cx="1044" cy="456" r="1.500"/><circle cx="979" cy="473" r="1.500"/><circle cx="948" cy="495" r="1.500"/><circle cx="918" cy="517" r="1.500"/><circle cx="887" cy="538" r="1.500"/><circle cx="992" cy="499" r="1.500"/><circle cx="1044" cy="499" r="1.500"/><circle cx="992" cy="542" r="1.500"/><circle cx="1044" cy="542" r="1.500"/></g>
            <g fill="#e8e8e8" font-size="7.500"><text x="997" y="346">340</text><text x="931" y="381">120</text><text x="1065" y="456">640</text><text x="962" y="415">100</text><text x="960" y="430">223</text><text x="906" y="492">514</text><text x="951" y="566">660</text></g>
            <path d="M838 557l5-5M997 602h4M997 605h4M997 608h4M1055 602h4M1055 605h4M1055 608h4" stroke="#22cc22"/>
            <text x="1083" y="304" font-size="12" fill="#c4c4c4">全部纵筋</text>
            <text x="1136" y="304" font-size="12" fill="#39e639">按截面</text>
          </svg>
        </div>
      </div>
      <div class="mt-[2px] h-[25px] shrink-0 flex items-center whitespace-nowrap">
        <div class="w-[240px] h-full bg-[#f6f6f6] flex items-center">
          <svg class="ml-[10px] w-[15px] h-[15px]" viewBox="0 0 15 15"><path d="M0 2h15v2.500H0zM4 2h2.500v13H4z" fill="#d99c9c"/><path d="M8 7l6 5-3 .5-1 2.500z" fill="#a8b4c2"/></svg><span class="ml-[5px]">正交</span>
          <div class="ml-[4px] w-[75px] h-[23px] border border-[#2a82d8] bg-[#d9e9f8] flex items-center pl-[2px]"><svg class="w-[17px] h-[17px]" viewBox="0 0 17 17"><path d="M1 1h15M1 5h15" stroke="#b05050"/><path d="M3 7h12v9H3z" fill="#eee" stroke="#444"/></svg><span class="ml-[3px]">动态输入</span></div>
          <svg class="ml-[7px] w-[17px] h-4" viewBox="0 0 17 16"><path d="M0 12h17M12 1v11" stroke="#2a74c8" stroke-width="1.300"/><rect x="10.500" y="10.500" width="3" height="3" fill="#1a2f80"/></svg><span class="ml-[3px]">垂点</span>
          <svg class="ml-[7px] w-4 h-4" viewBox="0 0 16 16"><path d="M0 8h16" stroke="#2a74c8" stroke-width="1.300"/><rect x="6" y="6" width="4" height="4" fill="#1a2f80"/></svg><span class="ml-[4px]">中点</span>
        </div>
      </div>
      <div class="mt-[6px] h-[22px] shrink-0 flex items-center gap-[3px] whitespace-nowrap">
        <div class="ml-[2px] w-[96px] h-full border border-[#e0e0e0] bg-[#f4f4f4] flex items-center pl-[3px] text-[#333344]">(X: -242 Y: 701)</div>
        <div class="w-[619px] h-full border border-[#e0e0e0] bg-[#f4f4f4] flex items-center pl-[1px]">选择钢筋进行编辑，选择标注进行修改或移动;</div>
        <svg class="ml-[6px] w-[9px] h-[9px] self-end mb-[2px]" viewBox="0 0 9 9"><path d="M7 1h1v1H7zM4 4h1v1H4zM7 4h1v1H7zM1 7h1v1H1zM4 7h1v1H4zM7 7h1v1H7z" fill="#9a9a9a"/></svg>
      </div>
    </div>
  </div>

  <!-- hand-drawn annotation over the screen -->
  <div class="absolute left-[630px] top-[402px] text-[#e21212] font-bold text-[20px] tracking-[3.300px] whitespace-nowrap leading-[22px] font-['Liberation_Serif','Noto_Serif_CJK_SC','Noto_Sans_CJK_SC',serif]">关闭正交，开启动态输入</div>
  <svg class="absolute left-0 top-0 w-[1366px] h-[768px] pointer-events-none" viewBox="0 0 1366 768">
    <path d="M650 443L652 444L662 558L672 557L664 584L649 553L657 556z" fill="#f00000" stroke="#f00000" stroke-width="3"/>
    <path d="M663 585L647 552L680 549z" fill="#f00000"/>
    <ellipse cx="671" cy="655" rx="114" ry="64" transform="rotate(3 671 655)" fill="none" stroke="#f40000" stroke-width="7"/>
  </svg>
</div>
</body>
</html>
